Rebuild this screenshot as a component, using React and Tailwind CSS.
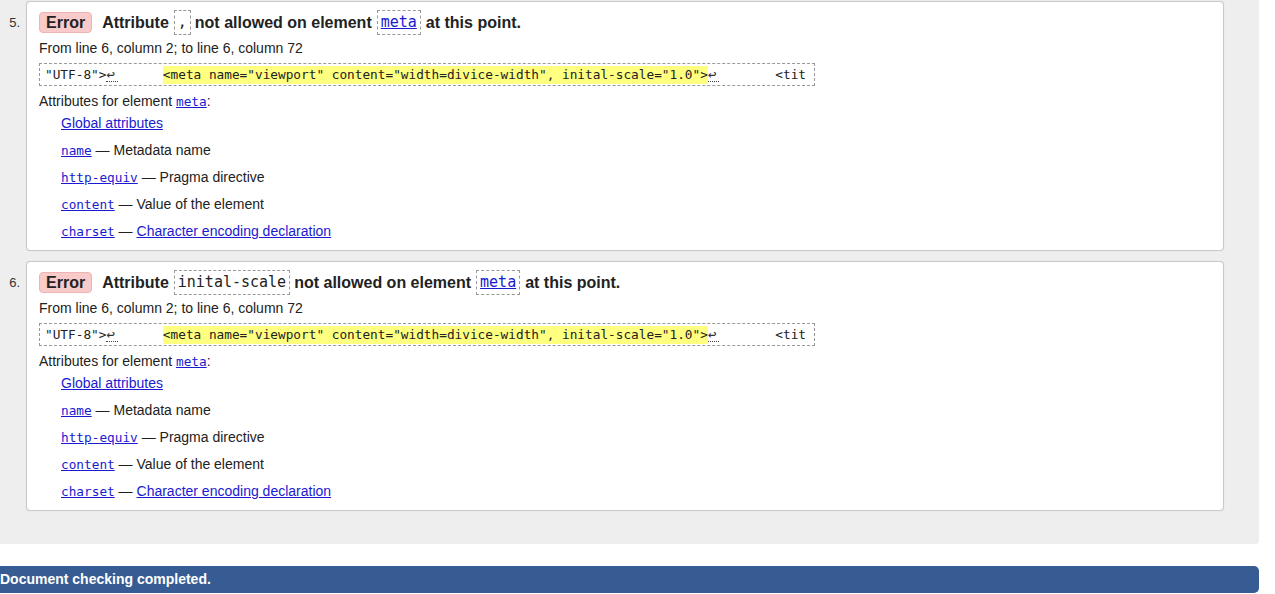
import React from "react";

const sans = { fontFamily: '"Liberation Sans", Arial, sans-serif' };

function CodeLink({ children }) {
  return (
    <a className="text-[#1a1ad0] underline [font-family:'DejaVu_Sans_Mono',monospace] text-[12.75px]">
      {children}
    </a>
  );
}

function HeadBox({ children, link }) {
  return (
    <span
      className={
        "inline-flex items-center h-[25px] px-[3px] border border-dashed border-[#999] font-normal [font-family:'DejaVu_Sans_Mono',monospace] text-[15px] " +
        (link ? "text-[#1a1ad0] underline" : "text-[#222]")
      }
    >
      {children}
    </span>
  );
}

function Ret() {
  return (
    <span className="inline-block text-[#333] text-[14px] border-b border-dotted border-[#444] leading-[14px] pr-[3px]">
      ↩
    </span>
  );
}

function Card({ num, attr }) {
  return (
    <div className="flex">
      <div className="w-[26px] shrink-0 pr-[6px] pt-[15px] text-right text-[13px] text-[#333] leading-[14px]">
        {num}.
      </div>
      <div className="flex-1 bg-white border border-[#c9c9c9] rounded-[4px] shadow-[0_0_1px_rgba(0,0,0,0.15)] pt-[7px] pl-[12px] pr-[12px] pb-[9px] text-[#222]">
        <div className="flex items-center h-[27px] text-[16px] font-bold">
          <span className="inline-flex items-center h-[21px] px-[6px] rounded-[4px] bg-[#f8caca] border border-[#eeb3b3] text-[#222] mr-[10px]">
            Error
          </span>
          <span className="mr-[5px]">Attribute</span>
          <HeadBox>{attr}</HeadBox>
          <span className="ml-[4px] mr-[5px]">not allowed on element</span>
          <HeadBox link>meta</HeadBox>
          <span className="ml-[5px]">at this point.</span>
        </div>
        <div className="mt-[2px] h-[20px] leading-[20px] text-[14px]">
          From line 6, column 2; to line 6, column 72
        </div>
        <div className="mt-[5px] w-[776px] h-[23px] border border-dashed border-[#999] flex items-center pl-[5px] whitespace-pre [font-family:'DejaVu_Sans_Mono',monospace] text-[12.75px] text-[#222]">
          <span>"UTF-8"&gt;</span>
          <Ret />
          <span className="w-[45px] inline-block" />
          <span className="bg-[#ffff80] leading-[18px]">
            &lt;meta name="viewport" content="width=divice-width", inital-scale="1.0"&gt;
          </span>
          <Ret />
          <span className="w-[56px] inline-block" />
          <span>&lt;tit</span>
        </div>
        <div className="mt-[5px] h-[20px] leading-[20px] text-[14px]">
          Attributes for element <CodeLink>meta</CodeLink>:
        </div>
        <div className="ml-[22px] mt-[2px] flex flex-col gap-[7px] text-[14px]">
          <div className="h-[20px] leading-[20px]">
            <a className="text-[#1a1ad0] underline">Global attributes</a>
          </div>
          <div className="h-[20px] leading-[20px]">
            <CodeLink>name</CodeLink> — Metadata name
          </div>
          <div className="h-[20px] leading-[20px]">
            <CodeLink>http-equiv</CodeLink> — Pragma directive
          </div>
          <div className="h-[20px] leading-[20px]">
            <CodeLink>content</CodeLink> — Value of the element
          </div>
          <div className="h-[20px] leading-[20px]">
            <CodeLink>charset</CodeLink> —{" "}
            <a className="text-[#1a1ad0] underline">Character encoding declaration</a>
          </div>
        </div>
      </div>
    </div>
  );
}

export default function App() {
  return (
    <div className="w-[1275px] h-[594px] bg-white overflow-hidden" style={sans}>
      <div className="w-[1259px] bg-[#eeeeee] rounded-br-[4px] pt-[1px] pr-[35px] pb-[33px] flex flex-col gap-[10px]">
        <Card num={5} attr="," />
        <Card num={6} attr="inital-scale" />
      </div>
      <div className="mt-[22px] w-[1259px] h-[27px] bg-[#365c93] rounded-r-[5px] flex items-center text-white font-bold text-[14px]">
        Document checking completed.
      </div>
    </div>
  );
}
